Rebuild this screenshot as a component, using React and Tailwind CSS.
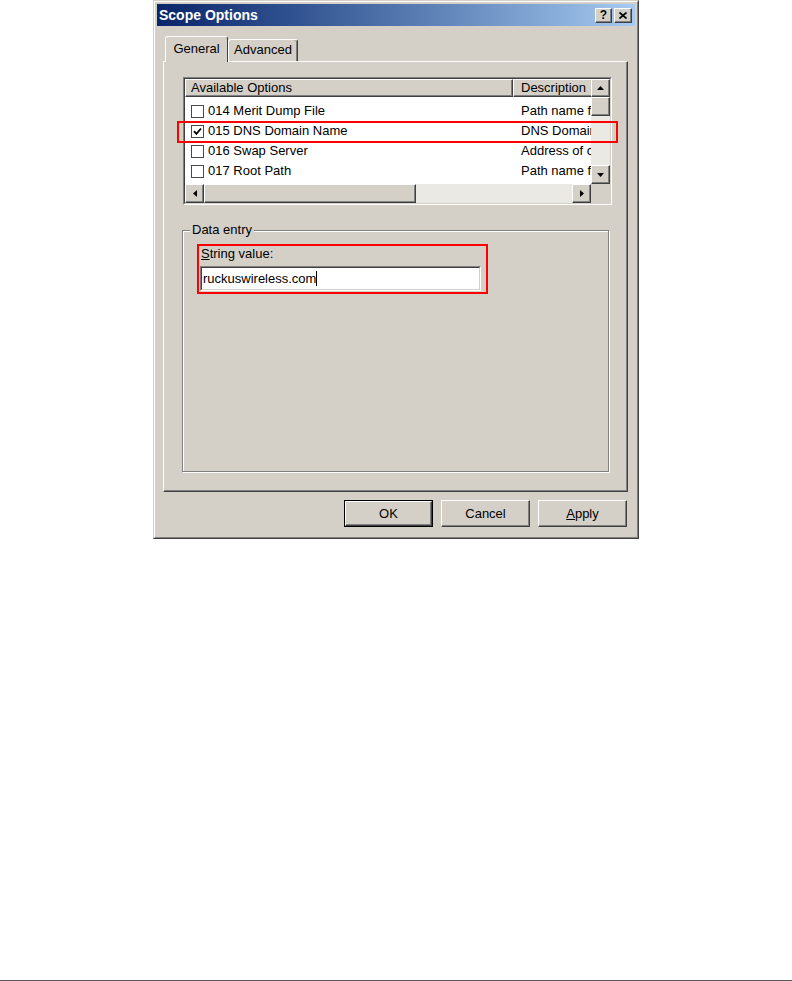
import { Fragment } from 'react';

const raised =
  'bg-[#d4d0c8] border border-t-white border-l-white border-r-[#404040] border-b-[#404040] shadow-[inset_-1px_-1px_0_#808080]';

const options = [
  { code: '014', name: 'Merit Dump File', desc: 'Path name for crash dump file', checked: false },
  { code: '015', name: 'DNS Domain Name', desc: 'DNS Domain name for client resolutions', checked: true },
  { code: '016', name: 'Swap Server', desc: "Address of client's swap server", checked: false },
  { code: '017', name: 'Root Path', desc: "Path name for client's root disk", checked: false },
];

function Arrow({ dir }) {
  const paths = {
    up: 'M0 4 L3.5 0 L7 4 Z',
    down: 'M0 0 L7 0 L3.5 4 Z',
    left: 'M4 0 L4 7 L0 3.5 Z',
    right: 'M0 0 L4 3.5 L0 7 Z',
  };
  const vertical = dir === 'up' || dir === 'down';
  return (
    <svg width={vertical ? 7 : 4} height={vertical ? 4 : 7} viewBox={vertical ? '0 0 7 4' : '0 0 4 7'}>
      <path d={paths[dir]} fill="#000" />
    </svg>
  );
}

function ScrollButton({ dir, className = '' }) {
  return (
    <div className={`${raised} flex items-center justify-center shrink-0 ${className}`}>
      <Arrow dir={dir} />
    </div>
  );
}

function Checkbox({ checked }) {
  return (
    <div className="w-[13px] h-[13px] border border-[#4a4a4a] bg-white flex items-center justify-center shrink-0">
      {checked && (
        <svg width="9" height="9" viewBox="0 0 9 9">
          <path d="M1 4.2 L3.4 6.8 L8 1.5" fill="none" stroke="#000" strokeWidth="1.8" />
        </svg>
      )}
    </div>
  );
}

function OptionsList() {
  return (
    <div className="w-[429px] h-[128px] border border-t-[#808080] border-l-[#808080] border-r-white border-b-white">
      <div className="w-full h-full border border-t-[#404040] border-l-[#404040] border-r-[#d4d0c8] border-b-[#d4d0c8] bg-white flex">
        <div className="w-[406px] flex flex-col">
          <div className="h-[18px] flex overflow-hidden">
            <div className={`${raised} w-[328px] shrink-0 pl-[5px] leading-[16px]`}>Available Options</div>
            <div className={`${raised} w-[90px] shrink-0 pl-[7px] leading-[16px] whitespace-nowrap`}>Description</div>
          </div>
          <div className="h-[87px] pt-[4px] overflow-hidden">
            {options.map((o) => (
              <div key={o.code} className="h-[20px] flex items-center whitespace-nowrap">
                <div className="w-[328px] shrink-0 pl-[6px] flex items-center gap-[4px]">
                  <Checkbox checked={o.checked} />
                  <span>
                    {o.code} {o.name}
                  </span>
                </div>
                <div className="w-[78px] shrink-0 pl-[8px] overflow-hidden">{o.desc}</div>
              </div>
            ))}
          </div>
          <div className="h-[19px] flex">
            <ScrollButton dir="left" className="w-[19px] h-[19px]" />
            <div className={`${raised} w-[212px] h-[19px]`} />
            <div className="flex-1 bg-[#ebe9e4]" />
            <ScrollButton dir="right" className="w-[19px] h-[19px]" />
          </div>
        </div>
        <div className="w-[19px] flex flex-col">
          <ScrollButton dir="up" className="w-[19px] h-[18px]" />
          <div className={`${raised} w-[19px] h-[19px]`} />
          <div className="flex-1 bg-[#ebe9e4]" />
          <ScrollButton dir="down" className="w-[19px] h-[19px]" />
          <div className="h-[19px] bg-[#d4d0c8]" />
        </div>
      </div>
    </div>
  );
}

function DialogButton({ children, isDefault = false }) {
  const button = (
    <div className={`${raised} w-full h-full flex items-center justify-center`}>{children}</div>
  );
  if (isDefault) {
    return <div className="w-[89px] h-[27px] border border-black">{button}</div>;
  }
  return <div className="w-[89px] h-[27px]">{button}</div>;
}

export default function App() {
  return (
    <div className="w-[792px] h-[981px] bg-white flex flex-col text-[13px] text-black font-['Liberation_Sans',Arial,sans-serif]">
      {/* dialog window */}
      <div className="ml-[153px] w-[486px] h-[539px] border border-t-[#d4d0c8] border-l-[#d4d0c8] border-r-[#404040] border-b-[#404040]">
        <div className="w-full h-full border border-t-white border-l-white border-r-[#808080] border-b-[#808080] bg-[#d4d0c8] p-[2px] flex flex-col">
          <div className="h-[22px] shrink-0 bg-linear-to-r from-[#0a246a] to-[#a6caf0] flex items-center justify-between pl-[2px] pr-[3px]">
            <span className="text-white font-bold text-[14px] leading-[18px]">Scope Options</span>
            <div className="flex gap-[2px]">
              <div className={`${raised} w-[17px] h-[15px] flex items-center justify-center font-bold text-[12px] leading-[12px]`}>?</div>
              <div className={`${raised} w-[18px] h-[15px] flex items-center justify-center`}>
                <svg width="8" height="7" viewBox="0 0 8 7">
                  <path d="M0.5 0.5 L7.5 6.5 M7.5 0.5 L0.5 6.5" stroke="#000" strokeWidth="1.7" />
                </svg>
              </div>
            </div>
          </div>

          <div className="flex-1 pt-[10px] pl-[6px] flex flex-col">
            {/* tabs */}
            <div className="h-[25px] flex items-end pl-[2px]">
              <div className="relative z-10 w-[63px] h-[26px] -mb-[1px] bg-[#d4d0c8] rounded-t-[3px] border-t border-l border-r border-t-white border-l-white border-r-[#404040] flex justify-center pt-[4px] leading-[16px]">
                General
              </div>
              <div className="w-[70px] h-[22px] bg-[#d4d0c8] rounded-t-[3px] border-t border-l border-r border-t-white border-l-white border-r-[#404040] shadow-[inset_-1px_0_0_#808080] flex justify-center pt-[2px] leading-[16px]">
                Advanced
              </div>
            </div>

            {/* tab panel */}
            <div className={`relative w-[465px] h-[431px] shrink-0 ${raised} pl-[19px] pt-[15px]`}>
              <OptionsList />

              <div className="relative mt-[25px] -ml-[1px] w-[427px] h-[242px] border border-[#808080] shadow-[1px_1px_0_#fff,inset_1px_1px_0_#fff]">
                <span className="absolute -top-[9px] left-[7px] px-[2px] bg-[#d4d0c8] leading-[16px]">Data entry</span>
                <div className="ml-[14px] mt-[13px] w-[291px] h-[50px] border-2 border-[#ff0000]">
                  <div className="pl-[2px] leading-[16px]">
                    <span className="underline">S</span>tring value:
                  </div>
                  <div className="ml-[1px] mt-[4px] w-[281px] h-[25px] border border-t-[#808080] border-l-[#808080] border-r-white border-b-white">
                    <div className="w-full h-full border border-t-[#404040] border-l-[#404040] border-r-[#d4d0c8] border-b-[#d4d0c8] bg-white flex items-center pl-[1px] leading-[16px]">
                      <span>ruckuswireless.com</span>
                      <span className="inline-block w-[1px] h-[15px] bg-black" />
                    </div>
                  </div>
                </div>
              </div>

              {/* highlight around selected option */}
              <div className="absolute left-[13px] top-[59px] w-[441px] h-[22px] border-2 border-[#ff0000] pointer-events-none" />
            </div>

            {/* buttons */}
            <div className="w-[465px] mt-[8px] flex justify-end gap-[8px] pr-[1px]">
              <DialogButton isDefault>OK</DialogButton>
              <DialogButton>Cancel</DialogButton>
              <DialogButton>
                <span>
                  <span className="underline">A</span>pply
                </span>
              </DialogButton>
            </div>
          </div>
        </div>
      </div>

      <div className="mt-auto h-[1px] bg-[#5a5a5a]" />
    </div>
  );
}
